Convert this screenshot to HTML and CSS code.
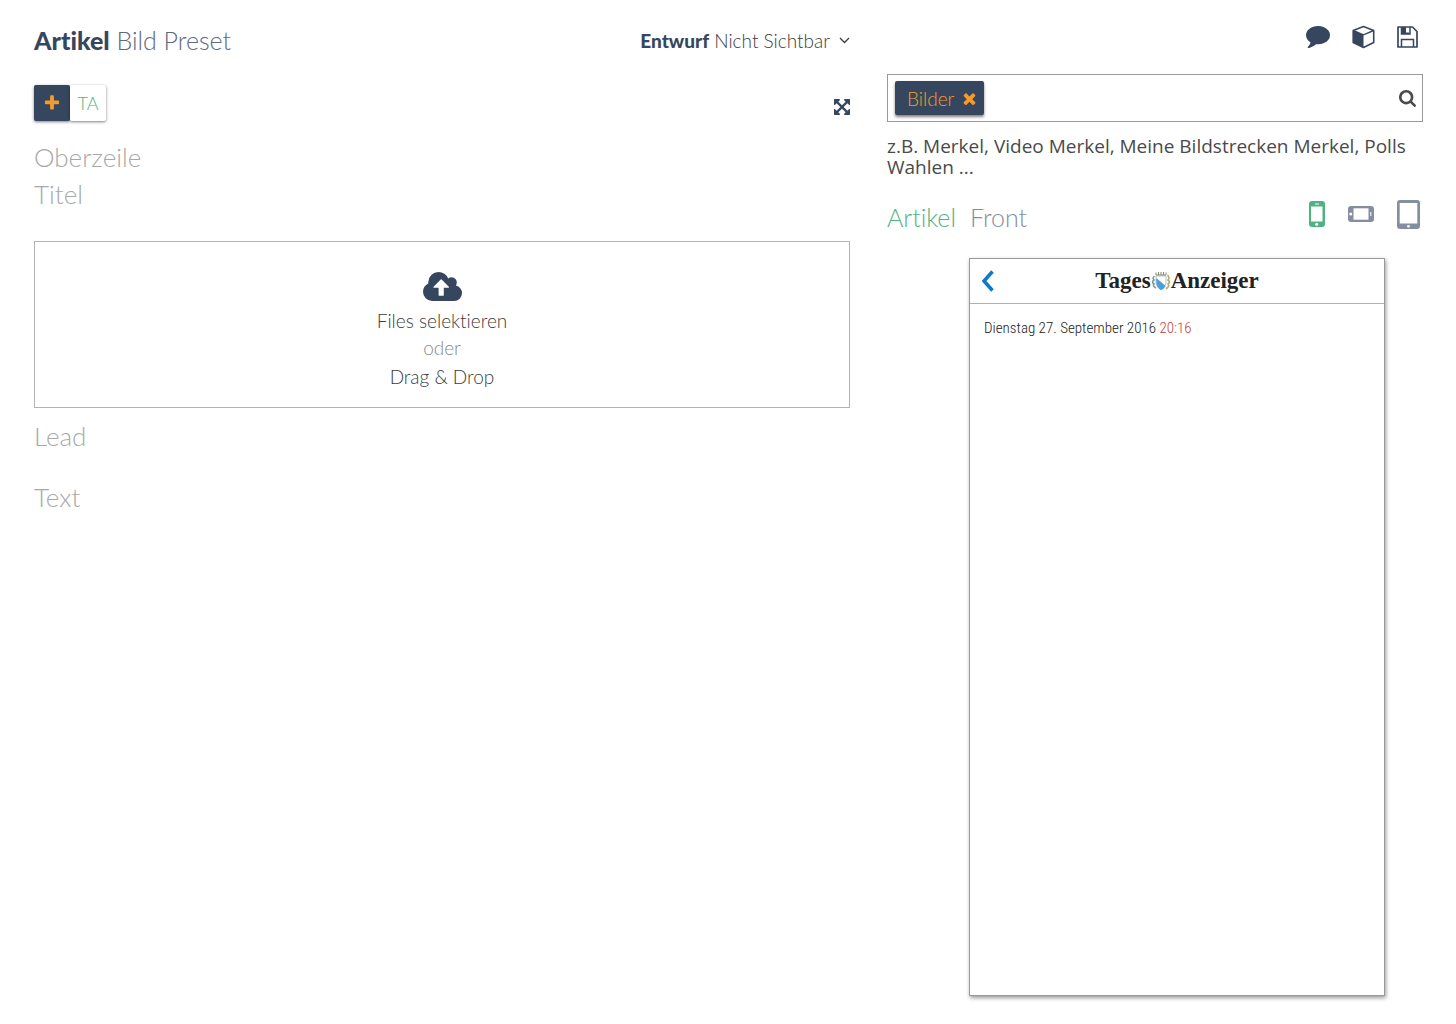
FILE: index.html
```html
<!DOCTYPE html>
<html lang="de">
<head>
<meta charset="utf-8">
<meta name="viewport" content="width=device-width, initial-scale=1">
<title>Artikel Bild Preset</title>
<link rel="stylesheet" href="styles.css">
</head>
<body>
<div class="app">
  <main class="editor">
    <header class="editor-header">
      <h1 class="title"><strong>Artikel</strong> Bild Preset</h1>
      <button type="button" class="status"><span><strong>Entwurf</strong> Nicht Sichtbar</span>
        <svg width="11" height="7" viewBox="0 0 11 7" aria-hidden="true"><path d="M1 1l4.500 4.500L10 1" fill="none" stroke="currentColor" stroke-width="1.300"/></svg>
      </button>
    </header>

    <div class="toolbar">
      <div class="tag-group">
        <button type="button" class="tag-add" aria-label="Hinzufügen"><svg width="18" height="18" viewBox="0 0 1792 1792" fill="currentColor"><path d="M1600 736v192q0 40-28 68t-68 28h-416v416q0 40-28 68t-68 28h-192q-40 0-68-28t-28-68v-416h-416q-40 0-68-28t-28-68v-192q0-40 28-68t68-28h416v-416q0-40 28-68t68-28h192q40 0 68 28t28 68v416h416q40 0 68 28t28 68z"/></svg></button>
        <button type="button" class="tag">TA</button>
      </div>
      <button type="button" class="icon-button expand" aria-label="Vollbild"><svg width="16" height="16" viewBox="128 128 1536 1536" fill="currentColor"><path d="M1411 541l-355 355 355 355 144-144q29-31 70-14 39 17 39 59v448q0 26-19 45t-45 19h-448q-42 0-59-40-17-39 14-69l144-144-355-355-355 355 144 144q31 30 14 69-17 40-59 40h-448q-26 0-45-19t-19-45v-448q0-42 40-59 39-17 69 14l144 144 355-355-355-355-144 144q-19 19-45 19-12 0-24-5-40-17-40-59v-448q0-26 19-45t45-19h448q42 0 59 40 17 39-14 69l-144 144 355 355 355-355-144-144q-31-30-14-69 17-40 59-40h448q26 0 45 19t19 45v448q0 42-39 59-13 5-25 5-26 0-45-19z"/></svg></button>
    </div>

    <form class="fields">
      <input class="field" type="text" placeholder="Oberzeile" aria-label="Oberzeile">
      <input class="field" type="text" placeholder="Titel" aria-label="Titel">
      <div class="dropzone">
        <svg width="39" height="29" viewBox="0 128 1920 1408" preserveAspectRatio="none" fill="currentColor" aria-hidden="true"><path d="M1280 864q0-14-9-23l-352-352q-9-9-23-9t-23 9l-351 351q-10 12-10 24 0 14 9 23t23 9h224v352q0 13 9.500 22.500t22.500 9.500h192q13 0 22.500-9.500t9.500-22.500v-352h224q13 0 22.500-9.500t9.500-22.500zm640 288q0 159-112.500 271.500t-271.500 112.500h-1088q-185 0-316.500-131.500t-131.500-316.500q0-130 70-240t188-165q-2-30-2-43 0-212 150-362t362-150q156 0 285.500 87t188.500 231q71-62 166-62 106 0 181 75t75 181q0 76-41 138 130 31 213.500 135.500t83.500 238.500z"/></svg>
        <button type="button" class="select-files">Files selektieren</button>
        <span class="or">oder</span>
        <span>Drag &amp; Drop</span>
      </div>
      <textarea class="field lead" placeholder="Lead" aria-label="Lead"></textarea>
      <textarea class="field body-text" placeholder="Text" aria-label="Text"></textarea>
    </form>
  </main>

  <aside class="sidebar">
    <div class="actions">
      <button type="button" class="icon-button" aria-label="Kommentare"><svg width="24" height="22" viewBox="0 256 1792 1536" preserveAspectRatio="none" fill="currentColor"><path d="M1792 896q0 174-120 321.500t-326 233-450 85.500q-70 0-145-8-198 175-460 242-49 14-114 22-17 2-30.500-9t-17.500-29v-1q-3-4-.500-12t2-10 4.500-9.500l6-9 7-8.500 8-9q7-8 31-34.500t34.500-38 31-39.500 32.500-51 27-59 26-76q-157-89-247.500-220t-90.500-281q0-130 71-248.500t191-204.500 286-136.500 348-50.500q244 0 450 85.500t326 233 120 321.500z"/></svg></button>
      <button type="button" class="icon-button" aria-label="Modul"><svg width="23" height="24" viewBox="0 0 23 24"><path d="M11.500 1.500L21.700 5.500V17.500L11.500 22.500L1.200 17.500V5.500Z" fill="#fff" stroke="currentColor" stroke-width="1.600" stroke-linejoin="round"/><path d="M1.200 5.500L11.500 9.800V22.500L1.200 17.500Z" fill="currentColor"/><path d="M1.200 5.500L11.500 9.800L21.700 5.500" fill="none" stroke="currentColor" stroke-width="1.400"/></svg></button>
      <button type="button" class="icon-button" aria-label="Speichern"><svg width="21" height="22" viewBox="0 0 21 22"><path d="M1 1H15.500L20 5.500V21H1Z" fill="none" stroke="currentColor" stroke-width="1.700" stroke-linejoin="round"/><path d="M4.500 1V8H13V1M4.500 21V13.500H16.500V21" fill="none" stroke="currentColor" stroke-width="1.500"/><path d="M4.500 1H9V6.500H12V8H4.500Z" fill="currentColor"/></svg></button>
    </div>

    <form class="search">
      <span class="chip">Bilder
        <button type="button" class="chip-remove" aria-label="Bilder entfernen"><svg width="13" height="13" viewBox="302 238 1188 1316" fill="currentColor"><path d="M1490 1322q0 40-28 68l-136 136q-28 28-68 28t-68-28l-294-294-294 294q-28 28-68 28t-68-28l-136-136q-28-28-28-68t28-68l294-294-294-294q-28-28-28-68t28-68l136-136q28-28 68-28t68 28l294 294 294-294q28-28 68-28t68 28l136 136q28 28 28 68t-28 68l-294 294 294 294q28 28 28 68z"/></svg></button>
      </span>
      <input class="search-input" type="text" aria-label="Suche">
      <button type="submit" class="icon-button search-button" aria-label="Suchen"><svg width="17" height="17" viewBox="64 128 1664 1664" fill="currentColor"><path d="M1216 832q0-185-131.500-316.500t-316.500-131.500-316.500 131.500-131.500 316.500 131.500 316.500 316.500 131.500 316.500-131.500 131.500-316.500zm512 832q0 52-38 90t-90 38q-54 0-90-38l-343-342q-179 124-399 124-143 0-273.500-55.500t-225-150-150-225-55.500-273.500 55.500-273.500 150-225 225-150 273.500-55.500 273.500 55.500 225 150 150 225 55.500 273.500q0 220-124 399l343 343q37 37 37 90z"/></svg></button>
    </form>
    <p class="hint">z.B. Merkel, Video Merkel, Meine Bildstrecken Merkel, Polls Wahlen ...</p>

    <div class="preview-bar">
      <nav class="tabs">
        <a class="active" href="#artikel">Artikel</a>
        <a href="#front">Front</a>
      </nav>
      <div class="devices">
        <button type="button" class="icon-button active" aria-label="Smartphone"><svg width="16" height="26" viewBox="0 0 16 26"><rect width="16" height="26" rx="3" fill="currentColor"/><path d="M2 5.500H13.500V20.500H2Z" fill="#fff"/><path d="M6 2.500H10V3.500H6Z" fill="#fff"/><circle cx="7.700" cy="23.200" r="1.500" fill="#fff"/></svg></button>
        <button type="button" class="icon-button" aria-label="Smartphone quer"><svg width="26" height="16" viewBox="0 0 26 16"><rect width="26" height="16" rx="3" fill="currentColor"/><path d="M5.500 2.300H20.500V13.700H5.500Z" fill="#fff"/><path d="M22.300 6H23.300V10H22.300Z" fill="#fff"/><circle cx="2.700" cy="8" r="1.500" fill="#fff"/></svg></button>
        <button type="button" class="icon-button" aria-label="Tablet"><svg width="23" height="29" viewBox="0 0 23 29"><rect width="23" height="29" rx="3" fill="currentColor"/><path d="M2.700 3H20.300V23.500H2.700Z" fill="#fff"/><circle cx="11.500" cy="26.300" r="1.400" fill="#fff"/></svg></button>
      </div>
    </div>

    <section class="preview">
      <header class="preview-header">
        <button type="button" class="back" aria-label="Zurück"><svg width="14" height="22" viewBox="0 0 14 22"><path d="M11.500 1.500L3 11L11.500 20.500" fill="none" stroke="currentColor" stroke-width="3.500"/></svg></button>
        <div class="logo">
          <span>Tages</span>
          <svg width="20" height="21" viewBox="0 0 20 21" aria-hidden="true">
            <path d="M5 5L15 5L15 12Q14 17 10 19Q6 17 5 12Z" fill="#fff" stroke="#999" stroke-width=".6"/>
            <path d="M5.300 7L14.700 15Q13 18 10 19Q6 17 5.300 12Z" fill="#4aa0dc"/>
            <path d="M5 1.500V4H15V1.500M7.500 1V4M10 1V4M12.500 1V4" fill="none" stroke="#8b8672" stroke-width="1"/>
            <path d="M3.500 5Q1 7 3 9Q0 11 3 13Q1 15 5 17" fill="none" stroke="#7e9aa0" stroke-width="1.600"/>
            <path d="M16.500 4Q19 7 17 9Q20 11 17 13Q19 15 15 18" fill="none" stroke="#b5ab6c" stroke-width="1.600"/>
          </svg>
          <span>Anzeiger</span>
        </div>
      </header>
      <p class="date">Dienstag 27. September 2016 <time>20:16</time></p>
    </section>
  </aside>
</div>
</body>
</html>
```
FILE: styles.css
```css
:root {
  --navy: #37465f;
  --green: #4fb381;
  --orange: #f39c2b;
  --grey: #858e9e;
  --text: #3c3c3c;
}

* {
  box-sizing: border-box;
}

body {
  margin: 0;
  background: #fff;
  color: var(--text);
  font-family: Lato, "Open Sans", sans-serif;
  font-weight: 300;
  font-size: 19px;
  font-variant-ligatures: none;
}

button,
input,
textarea {
  padding: 0;
  border: 0;
  background: none;
  color: inherit;
  font: inherit;
  font-variant-ligatures: none;
}

button {
  cursor: pointer;
}

svg {
  display: block;
}

strong {
  color: var(--navy);
  font-weight: 900;
}

.app {
  display: grid;
  grid-template-columns: minmax(0, 816fr) minmax(0, 536fr);
  gap: 37px;
  padding: 24px 33px 28px 34px;
}

.icon-button {
  color: var(--navy);
}

/* Editor */
.editor-header {
  display: flex;
  align-items: center;
  justify-content: space-between;
  height: 32px;
}

.title {
  margin: 0;
  color: #5d6a80;
  font-size: 25px;
  font-weight: 300;
  line-height: 32px;
}

.status {
  display: flex;
  align-items: center;
  gap: 9px;
}

.toolbar {
  display: flex;
  align-items: center;
  justify-content: space-between;
  margin-top: 29px;
}

.tag-group {
  display: flex;
}

.tag-add,
.tag {
  display: grid;
  place-items: center;
  width: 36px;
  height: 36px;
  border-radius: 2px;
  background: #fff;
  box-shadow: 0 1px 3px rgba(0, 0, 0, 0.5);
  color: var(--green);
}

.tag {
  font-size: 18px;
}

.tag-add {
  background: var(--navy);
  color: var(--orange);
}

.expand {
  padding-top: 8px;
}

.fields {
  display: flex;
  flex-direction: column;
  margin-top: 18px;
}

.field {
  width: 100%;
  height: 37px;
  font-size: 26px;
  line-height: 37px;
  resize: none;
}

.field::placeholder {
  color: #a8a8a8;
  opacity: 1;
}

.dropzone {
  display: flex;
  flex-direction: column;
  align-items: center;
  margin: 28px 0 10px;
  padding: 30px 0 16px;
  border: 1px solid #b3b3b3;
  line-height: 28px;
}

.dropzone svg {
  margin-bottom: 6px;
  color: var(--navy);
}

.dropzone .or {
  margin-bottom: 2px;
  line-height: 26px;
  color: #888;
}

.lead {
  height: 61px;
}

.body-text {
  height: 160px;
}

/* Sidebar */
.actions {
  display: flex;
  align-items: center;
  justify-content: flex-end;
  gap: 22px;
  height: 26px;
  padding-right: 5px;
}

.search {
  display: flex;
  align-items: center;
  height: 48px;
  margin-top: 24px;
  padding: 0 6px 0 7px;
  border: 1px solid #999;
}

.chip {
  display: flex;
  align-items: center;
  gap: 9px;
  height: 34px;
  padding: 0 8px 0 12px;
  border-radius: 2px;
  background: var(--navy);
  box-shadow: 0 2px 3px rgba(0, 0, 0, 0.5);
  color: var(--orange);
}

.search-input {
  flex: 1;
  min-width: 0;
  height: 34px;
  padding: 0 8px;
  outline: 0;
}

.search-button {
  color: #4a4a4a;
}

.hint {
  margin: 14px 0 0;
  color: #4a4a4a;
  font-family: "Open Sans", "Noto Sans", sans-serif;
  font-size: 19px;
  font-weight: 400;
  line-height: 21px;
}

.preview-bar {
  display: flex;
  justify-content: space-between;
  margin-top: 19px;
  padding-right: 3px;
}

.tabs {
  display: flex;
  gap: 14px;
  font-size: 25px;
  line-height: 40px;
}

.tabs a {
  color: var(--grey);
  text-decoration: none;
}

.devices {
  display: flex;
  align-items: center;
  gap: 23px;
  height: 34px;
}

.devices .icon-button {
  color: var(--grey);
}

.tabs .active,
.devices .active {
  color: var(--green);
}

.preview {
  min-height: 738px;
  margin: 21px 38px 0 82px;
  border: 1px solid #999;
  box-shadow: 1px 2px 4px rgba(0, 0, 0, 0.4);
}

.preview-header {
  display: grid;
  grid-template-columns: 40px 1fr 40px;
  align-items: center;
  height: 45px;
  border-bottom: 1px solid #b0b0b0;
}

.back {
  padding-left: 11px;
  color: #0b7bc8;
}

.logo {
  display: flex;
  align-items: center;
  justify-content: center;
  color: #222;
  font: bold 23px/40px "Liberation Serif", serif;
}

.date {
  margin: 12px 14px;
  color: #222;
  font: 300 15px/24px "Roboto Condensed", "Liberation Sans Narrow", Roboto, sans-serif;
}

.date time {
  color: #c0403d;
}
```
